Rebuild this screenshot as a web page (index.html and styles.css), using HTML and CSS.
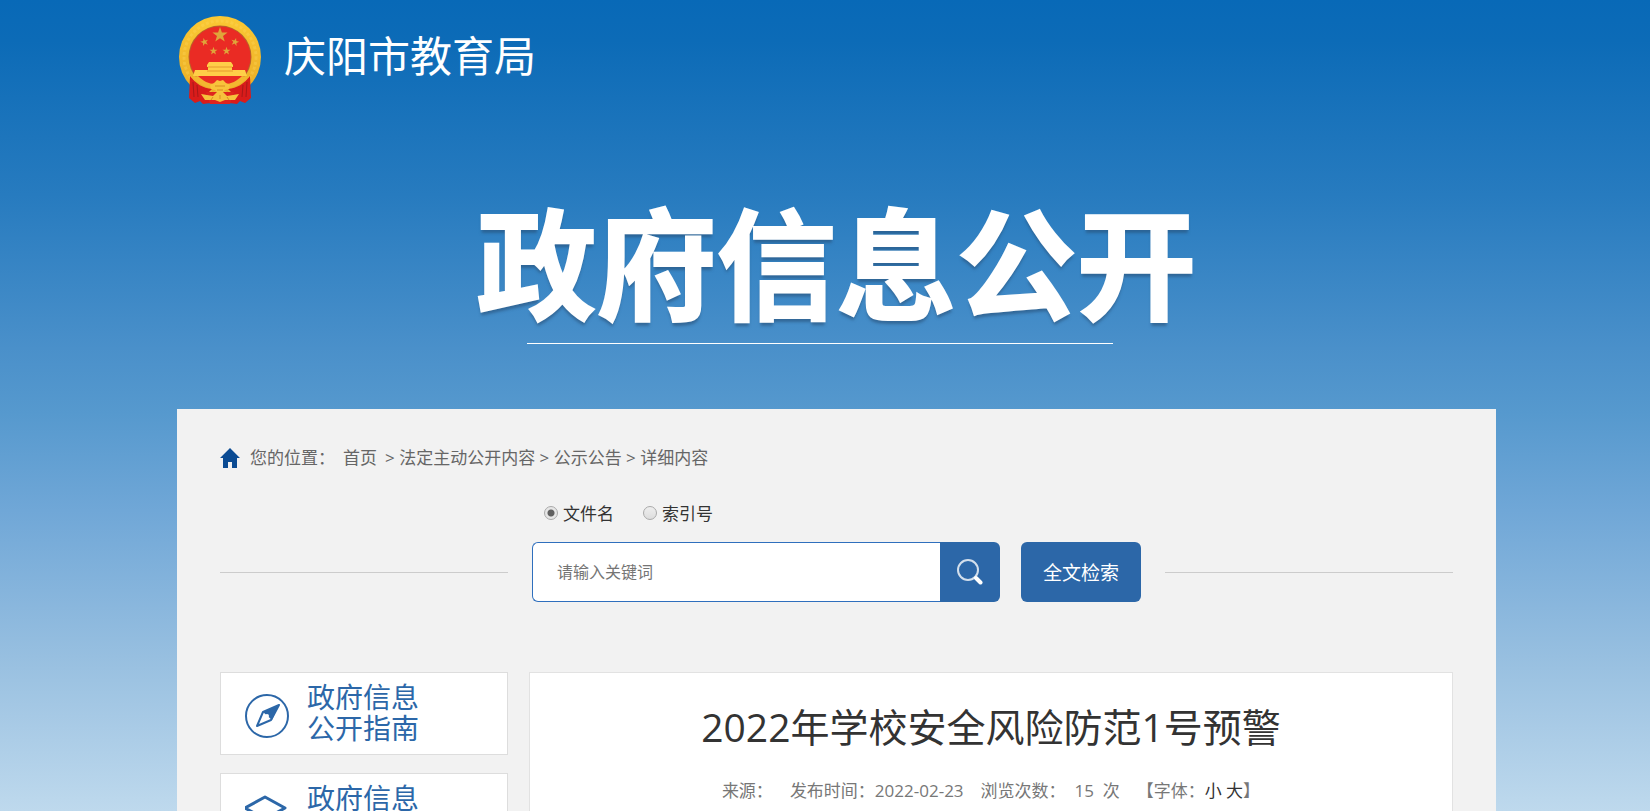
FILE: index.html
```html
<!DOCTYPE html>
<html lang="zh-CN">
<head>
  <meta charset="utf-8">
  <meta name="viewport" content="width=device-width, initial-scale=1">
  <title>2022年学校安全风险防范1号预警</title>
  <link rel="stylesheet" href="styles.css">
</head>
<body>
  <div class="wrap">
    <header class="header">
      <svg class="emblem" viewBox="0 0 84 88" aria-hidden="true">
        <defs>
          <linearGradient id="gold" x1="0" y1="0" x2="0" y2="1">
            <stop offset="0" stop-color="#fbc934"/>
            <stop offset="1" stop-color="#e9ab25"/>
          </linearGradient>
          <path id="star" d="M0-10 2.4-3.2 9.5-3.1 3.8 1.2 5.9 8.1 0 4-5.9 8.1-3.8 1.2-9.5-3.1-2.4-3.2z"/>
        </defs>
        <circle cx="42" cy="41" r="41" fill="url(#gold)"/>
        <circle cx="42" cy="41" r="36" fill="none" stroke="#ffdc62" stroke-width="3" stroke-dasharray="3 2" opacity=".3"/>
        <circle cx="42" cy="41" r="31.5" fill="#b8622a"/>
        <circle cx="42" cy="41" r="30.5" fill="#ea2b24"/>
        <g fill="#dfa53a">
          <use href="#star" transform="translate(42 19) scale(.8)"/>
          <use href="#star" transform="translate(26.500 26) rotate(-15) scale(.42)"/>
          <use href="#star" transform="translate(57 26) rotate(15) scale(.42)"/>
          <use href="#star" transform="translate(35.500 35) scale(.42)"/>
          <use href="#star" transform="translate(48.500 35) scale(.42)"/>
        </g>
        <path d="M31 46h22l2 3v2h-1v3h13l2 6H15l2-6h13v-3h-1v-2z" fill="#ffcf48"/>
        <path d="M30 51h24M29 55h26" stroke="#e69b2c" stroke-width="1"/>
        <path d="M12 60c6 8 13 12 22 13l-4 4 3 10-8 1-3-3-5 2-6-5z" fill="#d91c1b"/>
        <path d="M72 60c-6 8-13 12-22 13l4 4-3 10 8 1 3-3 5 2 6-5z" fill="#d91c1b"/>
        <path d="M15 66l1 15M19 69l1 12M69 66l-1 15M65 69l-1 12" stroke="#a81818"/>
        <path d="M28 76h28l-4 12H32z" fill="#df241e"/>
        <path d="M14 61c6 7 14 11 23 12h10c9-1 17-5 23-12l-6-1c-5 5-11 8-17 8H37c-6 0-12-3-17-8z" fill="#f3b730"/>
        <path d="M36 67l3-3 3 1 3-1 3 3 4 2-1 4-4 1-2 2h-6l-2-2-4-1-1-4z" fill="#f8c33c"/>
        <path d="M23 78l12 2 4-4h6l4 4 12-2-4 6-10 0-5 2-5-2-10 0z" fill="#f6c13d"/>
        <path d="M37 70h10M39 74h6M35 81l-2 3M42 79v4M49 81l2 3" stroke="#d88e20"/>
      </svg>
      <span class="site-name">庆阳市教育局</span>
    </header>

    <div class="banner">
      <h1>政府信息公开</h1>
      <hr>
    </div>

    <main class="panel">
      <nav class="crumbs" aria-label="您的位置">
        <svg class="home" viewBox="0 0 20 20" aria-hidden="true"><path d="M10 0l10 10h-3v10h-5v-6H8v6H3V10H0z" fill="#0b4b93"/></svg>
        <span class="crumbs-label">您的位置：</span>
        <a class="crumbs-home" href="#">首页</a>
        <span class="crumbs-path">&gt; <a href="#">法定主动公开内容</a> &gt; <a href="#">公示公告</a> &gt; 详细内容</span>
      </nav>

      <form class="search">
        <div class="search-type">
          <label><input type="radio" name="type" checked>文件名</label>
          <label><input type="radio" name="type">索引号</label>
        </div>
        <div class="search-row">
          <span class="rule"></span>
          <div class="search-box">
            <input type="text" placeholder="请输入关键词" aria-label="请输入关键词">
            <button type="submit" class="search-btn" aria-label="搜索">
              <svg viewBox="0 0 26 26" aria-hidden="true">
                <circle cx="11" cy="11" r="10" fill="none" stroke="#d3dfec" stroke-width="2"/>
                <path d="M19 19l4.500 4.500" stroke="#fff" stroke-width="4" stroke-linecap="round"/>
              </svg>
            </button>
          </div>
          <button type="button" class="full-btn">全文检索</button>
          <span class="rule"></span>
        </div>
      </form>

      <div class="content">
        <aside class="side">
          <a class="side-card" href="#">
            <svg viewBox="0 0 44 44" aria-hidden="true">
              <circle cx="22" cy="22" r="21" fill="none" stroke="#2c67a8" stroke-width="2"/>
              <path d="M34 11L18 18l9 8z" fill="#2c67a8"/>
              <path d="M18 18l-6 14 14-6 8-15z" fill="none" stroke="#2c67a8" stroke-width="2" stroke-linejoin="round"/>
              <circle cx="22" cy="22" r="2" fill="#fff"/>
            </svg>
            <span>政府信息<br>公开指南</span>
          </a>
          <a class="side-card" href="#">
            <svg viewBox="0 0 44 44" aria-hidden="true">
              <g fill="none" stroke="#2c67a8" stroke-width="3" stroke-linejoin="round">
                <path d="M20 2l20 11-20 11L0 13z"/>
                <path d="M2 22l18 10 18-10M2 31l18 10 18-10"/>
              </g>
            </svg>
            <span>政府信息</span>
          </a>
        </aside>

        <article class="article">
          <h2>2022年学校安全风险防范1号预警</h2>
          <div class="meta">
            <span>来源：</span>
            <span>发布时间：2022-02-23</span>
            <span>浏览次数：&nbsp; 15 &nbsp;次</span>
            <span>【字体：<a href="#">小</a> <a href="#">大</a>】</span>
          </div>
        </article>
      </div>
    </main>
  </div>
</body>
</html>
```
FILE: styles.css
```css
* {
  box-sizing: border-box;
}

html {
  height: 100%;
  overflow: hidden;
}

body {
  margin: 0;
  height: 100%;
  overflow: hidden;
  padding-left: 23px;
  color: #333;
  font-family: "Open Sans", "Noto Sans CJK SC", sans-serif;
  font-size: 17px;
  line-height: 24px;
  background: linear-gradient(#0869b7 0, #0c6bb7 5%, #277bbf 24%, #4a90ca 43%, #5699ce 51%, #70a7d7 63%, #97bfe0 81%, #bed9ed 100%);
}

a {
  color: inherit;
  text-decoration: none;
}

button,
input {
  font-family: inherit;
}

.wrap {
  max-width: 1319px;
  margin: 0 auto;
}

.header {
  display: flex;
  align-items: center;
  gap: 22px;
  padding: 16px 0 0 1px;
}

.emblem {
  width: 84px;
  height: 88px;
}

.site-name {
  color: #fff;
  font-size: 42px;
  line-height: 60px;
  padding-bottom: 8px;
}

.banner {
  height: 305px;
  padding-top: 89px;
  text-align: center;
}

.banner h1 {
  margin: 0;
  color: #fff;
  font-size: 120px;
  line-height: 144px;
  -webkit-text-stroke: 2px #fff;
  text-shadow: 0 4px 3px rgba(40, 80, 120, .6);
}

.banner hr {
  width: 586px;
  height: 1px;
  margin: 6px auto 0 350px;
  border: 0;
  background: #fff;
}

/* main panel */

.panel {
  min-height: 600px;
  padding: 37px 43px 0;
  background: #f2f2f2;
}

.crumbs {
  display: flex;
  align-items: center;
  color: #666;
}

.home {
  width: 20px;
  height: 20px;
  margin-right: 10px;
}

.crumbs-label {
  margin-right: 8px;
}

.crumbs-home {
  margin-right: 8px;
}

.search-type {
  display: flex;
  gap: 29px;
  padding: 32px 0 0 324px;
}

.search-type label {
  display: flex;
  align-items: center;
}

.search-type input {
  appearance: none;
  width: 14px;
  height: 14px;
  margin: 0 5px 2px 0;
  border: 1px solid #aaa;
  border-radius: 50%;
  background: linear-gradient(#eee, #ddd);
}

.search-type input:checked {
  background: radial-gradient(circle, #606060 3px, #e6e6e6 4px);
}

.search-row {
  display: flex;
  align-items: center;
  padding-top: 16px;
}

.rule {
  flex: 1;
  height: 1px;
  background: #ccc;
}

.search-box {
  display: flex;
  width: 468px;
  height: 60px;
  margin: 0 21px 0 24px;
}

.search-box input {
  flex: 1;
  min-width: 0;
  padding: 0 24px;
  border: 1px solid #2f6fbd;
  border-right: 0;
  border-radius: 6px 0 0 6px;
  background: #fff;
  font-size: 16px;
  outline: none;
}

.search-box input::placeholder {
  color: #757575;
}

.search-btn {
  display: flex;
  align-items: center;
  justify-content: center;
  width: 60px;
  padding: 0;
  border: 0;
  border-radius: 0 6px 6px 0;
  background: #2c67a8;
}

.search-btn svg {
  width: 26px;
  height: 26px;
}

.full-btn {
  width: 120px;
  height: 60px;
  margin-right: 24px;
  padding: 0;
  border: 0;
  border-radius: 6px;
  background: #2c67a8;
  color: #fff;
  font-size: 19px;
}

.content {
  display: flex;
  align-items: flex-start;
  gap: 21px;
  padding-top: 70px;
}

.side {
  display: flex;
  flex-direction: column;
  gap: 18px;
  width: 288px;
}

.side-card {
  display: flex;
  align-items: center;
  gap: 18px;
  min-height: 83px;
  padding-left: 24px;
  border: 1px solid #ddd;
  background: #fff;
  color: #2c67a8;
  font-size: 28px;
  line-height: 31px;
}

.side-card svg {
  width: 44px;
  height: 44px;
  margin-top: 4px;
}

.side-card span {
  align-self: flex-start;
  padding-top: 9px;
}

.article {
  flex: 1;
  min-height: 400px;
  padding: 26px 20px 0;
  border: 1px solid #e2e2e2;
  background: #fff;
  text-align: center;
}

.article h2 {
  margin: 0;
  font-size: 39px;
  font-weight: 400;
  line-height: 56px;
}

.meta {
  display: flex;
  justify-content: center;
  gap: 17px;
  padding-top: 24px;
  color: #777;
}

.meta a {
  color: #333;
}
```
